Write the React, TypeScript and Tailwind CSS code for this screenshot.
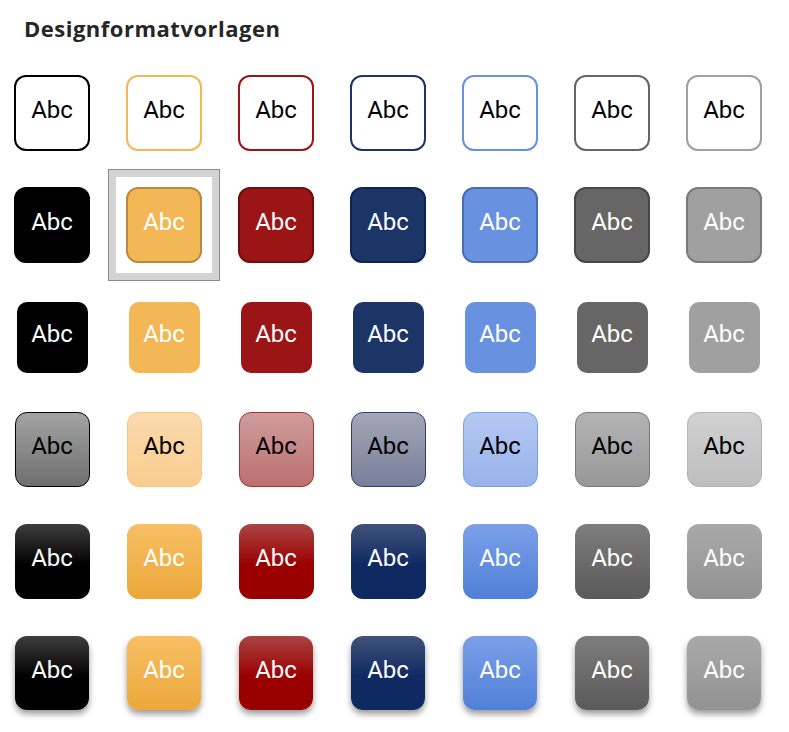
import React from "react";

const txt = "text-[24px] leading-none mb-[6px] [font-family:Roboto,'Liberation_Sans',sans-serif]";

const row1 = [
  "border-[#000000]",
  "border-[#f3b756]",
  "border-[#9c1516]",
  "border-[#1b3666]",
  "border-[#6892e0]",
  "border-[#666666]",
  "border-[#a0a0a0]",
];

const row2 = [
  "bg-[#000000] border-[#000000]",
  "bg-[#f3b756] border-[#b98a3e]",
  "bg-[#9c1516] border-[#6d0e0f]",
  "bg-[#1b3666] border-[#112450]",
  "bg-[#6892e0] border-[#4a6cb0]",
  "bg-[#666666] border-[#474747]",
  "bg-[#a0a0a0] border-[#7a7a7a]",
];

const row3 = [
  "bg-[#000000]",
  "bg-[#f3b756]",
  "bg-[#9c1516]",
  "bg-[#1b3666]",
  "bg-[#6892e0]",
  "bg-[#666666]",
  "bg-[#a0a0a0]",
];

const row4 = [
  "bg-[linear-gradient(to_bottom,#a3a3a3,#6f6f6f)] border-[#000000]",
  "bg-[linear-gradient(to_bottom,#fbdaae,#f9cd8f)] border-[#f5c77e]",
  "bg-[linear-gradient(to_bottom,#cf9d9d,#bd6f6f)] border-[#a53030]",
  "bg-[linear-gradient(to_bottom,#a3a6b6,#787f99)] border-[#2a4070]",
  "bg-[linear-gradient(to_bottom,#b5c8f2,#98b2ea)] border-[#7aa0e6]",
  "bg-[linear-gradient(to_bottom,#b3b3b3,#989898)] border-[#777777]",
  "bg-[linear-gradient(to_bottom,#d1d1d1,#bebebe)] border-[#b3b3b3]",
];

const row5 = [
  "bg-[linear-gradient(to_bottom,#3d3d3d,#000000_55%,#000000)]",
  "bg-[linear-gradient(to_bottom,#f7c064,#eca73a)]",
  "bg-[linear-gradient(to_bottom,#aa4444,#9a0000_55%,#990000)]",
  "bg-[linear-gradient(to_bottom,#40527a,#0f2a62_55%,#0e2860)]",
  "bg-[linear-gradient(to_bottom,#7ba0e8,#5080d8)]",
  "bg-[linear-gradient(to_bottom,#7d7d7d,#5a5a5a)]",
  "bg-[linear-gradient(to_bottom,#a9a9a9,#929292)]",
];

function Cell({ children, selected }: { children: React.ReactNode; selected?: boolean }) {
  return (
    <div
      className={
        selected
          ? "w-[76px] h-[76px] flex items-center justify-center bg-white shadow-[0_0_0_10px_#ffffff,0_0_0_17px_#d3d3d3,0_0_0_18px_#8c8c8c]"
          : "w-[76px] h-[76px] flex items-center justify-center"
      }
    >
      {children}
    </div>
  );
}

export default function App() {
  return (
    <div className="w-[789px] h-[732px] bg-white overflow-hidden">
      <h1 className="pl-[24px] pt-[13px] text-[22px] leading-[30px] tracking-[0.5px] font-bold text-[#262626] [font-family:'Open_Sans','Noto_Sans',sans-serif]">
        Designformatvorlagen
      </h1>
      <div className="mt-[32px] pl-[14px] grid grid-cols-[repeat(7,76px)] gap-x-[36px] gap-y-[36px]">
        {row1.map((c, i) => (
          <Cell key={"a" + i}>
            <div className={"w-[76px] h-[76px] rounded-[12px] border-2 bg-white flex items-center justify-center text-black " + c}>
              <span className={txt}>Abc</span>
            </div>
          </Cell>
        ))}
        {row2.map((c, i) => (
          <Cell key={"b" + i} selected={i === 1}>
            <div className={"w-[76px] h-[76px] rounded-[12px] border-2 flex items-center justify-center text-white " + c}>
              <span className={txt}>Abc</span>
            </div>
          </Cell>
        ))}
        {row3.map((c, i) => (
          <Cell key={"c" + i}>
            <div className={"w-[71px] h-[71px] rounded-[10px] flex items-center justify-center text-white " + c}>
              <span className={txt}>Abc</span>
            </div>
          </Cell>
        ))}
        {row4.map((c, i) => (
          <Cell key={"d" + i}>
            <div className={"w-[75px] h-[75px] rounded-[12px] border flex items-center justify-center text-black " + c}>
              <span className={txt}>Abc</span>
            </div>
          </Cell>
        ))}
        {row5.map((c, i) => (
          <Cell key={"e" + i}>
            <div className={"w-[75px] h-[75px] rounded-[12px] flex items-center justify-center text-white " + c}>
              <span className={txt}>Abc</span>
            </div>
          </Cell>
        ))}
        {row5.map((c, i) => (
          <Cell key={"f" + i}>
            <div className={"w-[74px] h-[74px] rounded-[12px] flex items-center justify-center text-white shadow-[0_4px_6px_rgba(0,0,0,0.4)] " + c}>
              <span className={txt}>Abc</span>
            </div>
          </Cell>
        ))}
      </div>
    </div>
  );
}
